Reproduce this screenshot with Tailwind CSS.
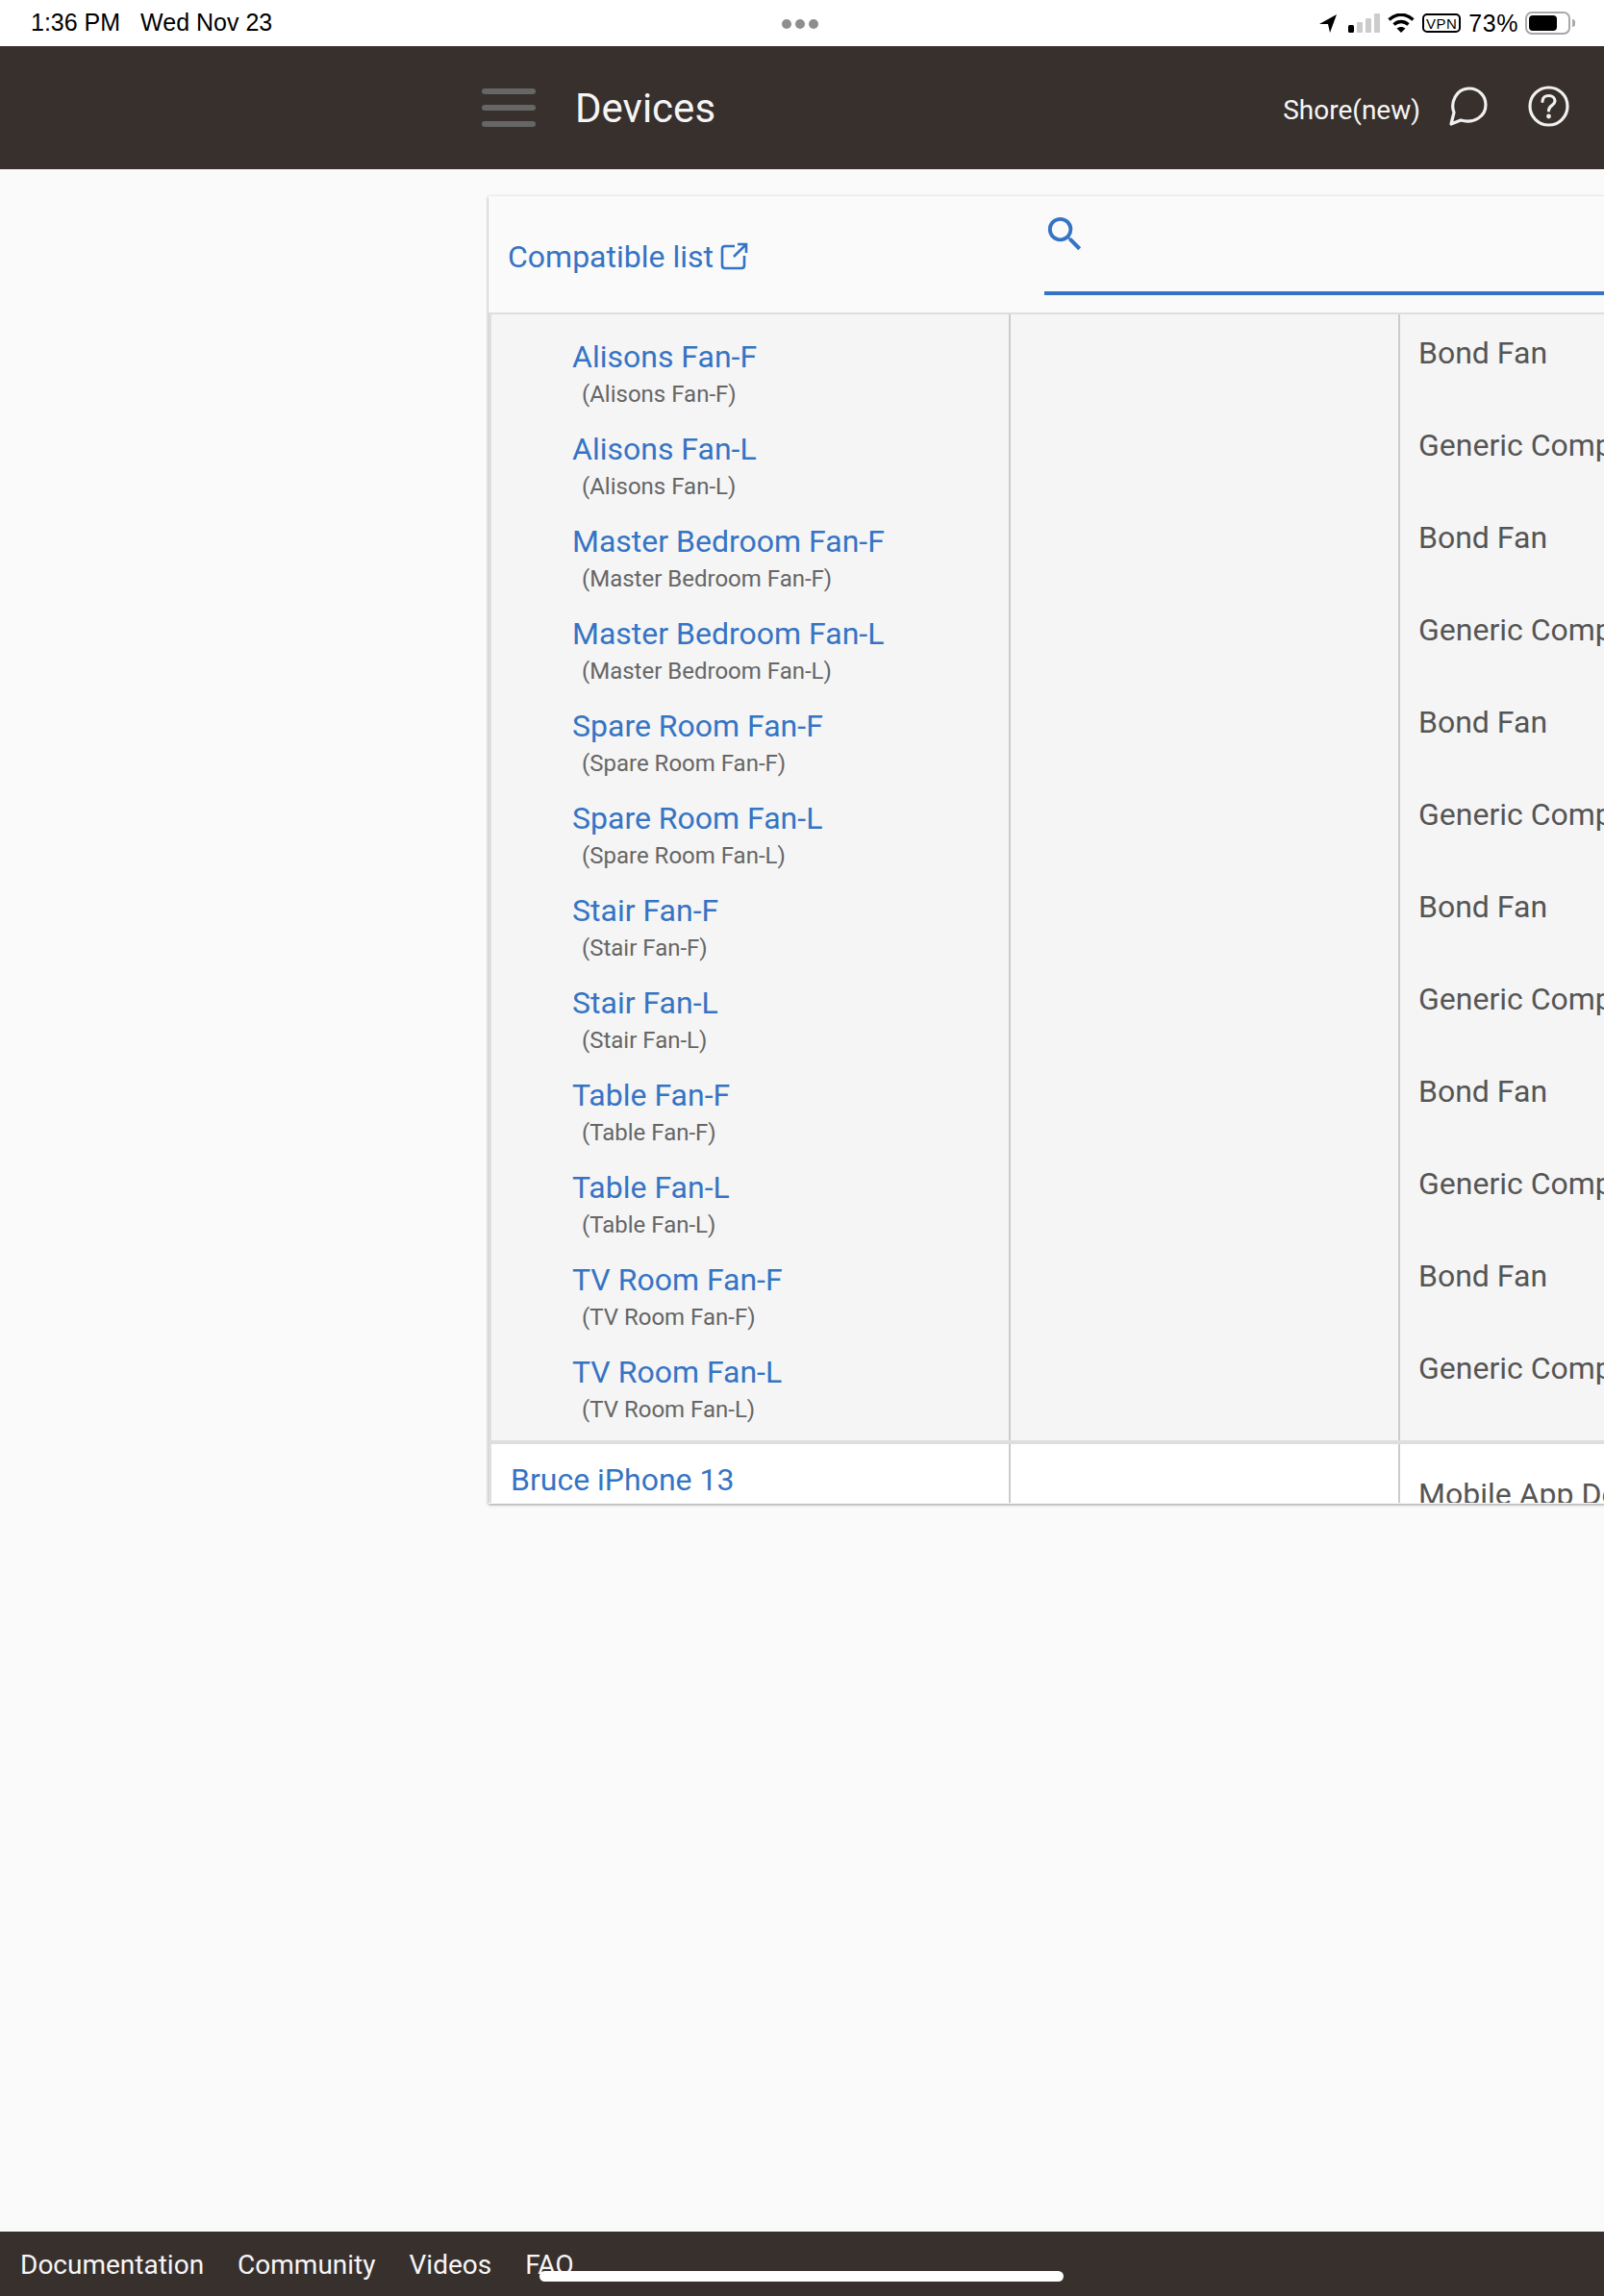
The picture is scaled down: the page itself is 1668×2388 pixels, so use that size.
<!doctype html>
<html lang="en">
<head>
<meta charset="utf-8">
<title>Devices</title>
<script src="https://cdn.jsdelivr.net/npm/@tailwindcss/browser@4"></script>
</head>
<body class="m-0">
<div class="relative flex flex-col w-[1668px] h-[2388px] overflow-hidden bg-[#fafafa] font-['Roboto',sans-serif]">

  <!-- iPad status bar -->
  <div class="relative flex items-center h-12 shrink-0 bg-white text-black font-['Liberation_Sans',sans-serif] text-[25px]">
    <span class="ml-8">1:36 PM</span>
    <span class="ml-[21px]">Wed Nov 23</span>
    <div class="absolute left-[813px] top-[20px] flex gap-[4px]">
      <span class="w-[10px] h-[10px] rounded-full bg-[#8e8e8e]"></span>
      <span class="w-[10px] h-[10px] rounded-full bg-[#8e8e8e]"></span>
      <span class="w-[10px] h-[10px] rounded-full bg-[#8e8e8e]"></span>
    </div>
    <div class="ml-auto mr-[30px] flex items-center">
      <svg class="w-[18px] h-[19px]" viewBox="0 0 18 19"><path d="M0 10 18 0 11 19 9 10Z" fill="#000"/></svg>
      <svg class="w-[34px] h-[20px] ml-[12px]" viewBox="0 0 34 20"><rect x="0" y="12" width="6" height="8" rx="1.5" fill="#000"/><rect x="9" y="9" width="6" height="11" rx="1" fill="#ccc"/><rect x="18" y="5" width="6" height="15" rx="1" fill="#ccc"/><rect x="27" y="0" width="6" height="20" rx="1" fill="#ccc"/></svg>
      <svg class="w-[28px] h-[20px] ml-[7px]" viewBox="0 0 28 20" fill="none" stroke="#000" stroke-width="3.4"><path d="M1.5 6.5C9 -0.5 19 -0.5 26.5 6.5"/><path d="M6.5 11.5C11 7.5 17 7.5 21.5 11.5"/><path d="M14 20 9.5 15.6C12 13.5 16 13.5 18.5 15.6Z" fill="#000" stroke="none"/></svg>
      <span class="ml-[8px] flex items-center justify-center w-[40px] h-[20px] rounded-[5px] border-2 border-black text-[15px] leading-none tracking-[0.5px]">VPN</span>
      <span class="ml-[8px] text-[25px] leading-none tracking-[0.6px]">73%</span>
      <div class="ml-[7px] flex items-center">
        <div class="w-[47px] h-[24px] rounded-[7px] border-2 border-[#a8a8a8] p-[2px]"><div class="w-[29px] h-full rounded-[4px] bg-black"></div></div>
        <span class="ml-[2px] w-[3px] h-[8px] rounded-r-full bg-[#a8a8a8]"></span>
      </div>
    </div>
  </div>

  <!-- App header -->
  <header class="flex items-center h-32 shrink-0 bg-[#38302d] text-[#f5f5f5]">
    <div class="ml-[501px] flex flex-col gap-[11px] w-[56px]">
      <span class="h-[6px] rounded-full bg-[#666]"></span>
      <span class="h-[6px] rounded-full bg-[#666]"></span>
      <span class="h-[6px] rounded-full bg-[#666]"></span>
    </div>
    <h1 class="ml-[41px] mt-[2px] text-[42px] leading-none font-normal">Devices</h1>
    <span class="ml-auto mt-[6px] text-[28px] leading-none">Shore(new)</span>
    <svg class="ml-[30px] -mt-[3px] w-[40px] h-[41px]" viewBox="0 0 40 41" fill="none" stroke="#f0f0f0" stroke-width="3.2" stroke-linejoin="round"><path d="M2 39 5 27C1 17 7 2 21 2 31 2 38 10 38 19 38 31 26 39 12 35Z"/></svg>
    <svg class="ml-[42px] mr-[36px] -mt-[4px] w-[43px] h-[43px]" viewBox="0 0 43 43" fill="none" stroke="#f0f0f0" stroke-width="3.2"><circle cx="21.5" cy="21.5" r="19.5"/><path d="M15 16.5C15 12.5 18 10.5 21.5 10.5 25.5 10.5 28 13 28 16 28 20.5 21.5 20.5 21.5 26" stroke-linecap="round"/><circle cx="21.5" cy="32" r="2.4" fill="#f0f0f0" stroke="none"/></svg>
  </header>

  <!-- Device table card -->
  <main class="flex-1 pt-7 pl-[508px] overflow-hidden">
    <div class="w-[1400px] h-[1360px] overflow-hidden bg-[#fafafa] shadow-[0_1px_3px_rgba(0,0,0,0.4)]">
      <div class="flex h-[121px]">
        <a class="flex items-center w-[578px] pl-[20px] pt-[5px] text-[32px] text-[#3574c4]">
          Compatible list
          <svg class="ml-[7px] -mt-[1px] w-[29px] h-[29px]" viewBox="0 0 29 29" fill="none" stroke="#3574c4" stroke-width="2.6"><path d="M15 4H5C3 4 2 5 2 7V24C2 26 3 27 5 27H22C24 27 25 26 25 24V14"/><path d="M14 15 27 2M18 2H27V11"/></svg>
        </a>
        <div class="flex-1 pt-[16px] h-[103px] border-b-[4px] border-[#3574c4]">
          <svg class="ml-[-2px] w-[47px] h-[47px]" viewBox="0 0 24 24" fill="#3574c4"><path d="M15.5 14h-.79l-.28-.27A6.47 6.47 0 0 0 16 9.5 6.5 6.5 0 1 0 9.5 16c1.61 0 3.09-.59 4.23-1.57l.27.28v.79l5 4.99L20.49 19l-4.99-5zm-6 0C7.01 14 5 11.99 5 9.5S7.01 5 9.5 5 14 7.01 14 9.5 11.99 14 9.5 14z"/></svg>
        </div>
      </div>

      <!-- Fan group -->
      <div class="grid grid-cols-[540px_405px_1fr] h-[1177px] border-t-2 border-b-4 border-l-[3px] border-[#dedede] bg-[#f5f5f5] box-border">
        <div class="pt-[15px] border-r-2 border-[#cccccc]">
          <div class="h-24 pl-[84px] pt-[10px]"><a class="block text-[32px] leading-[38px] text-[#3574c4]">Alisons Fan-F</a><p class="mt-[1px] pl-[10px] text-[24px] leading-[38px] text-[#666]">(Alisons Fan-F)</p></div>
          <div class="h-24 pl-[84px] pt-[10px]"><a class="block text-[32px] leading-[38px] text-[#3574c4]">Alisons Fan-L</a><p class="mt-[1px] pl-[10px] text-[24px] leading-[38px] text-[#666]">(Alisons Fan-L)</p></div>
          <div class="h-24 pl-[84px] pt-[10px]"><a class="block text-[32px] leading-[38px] text-[#3574c4]">Master Bedroom Fan-F</a><p class="mt-[1px] pl-[10px] text-[24px] leading-[38px] text-[#666]">(Master Bedroom Fan-F)</p></div>
          <div class="h-24 pl-[84px] pt-[10px]"><a class="block text-[32px] leading-[38px] text-[#3574c4]">Master Bedroom Fan-L</a><p class="mt-[1px] pl-[10px] text-[24px] leading-[38px] text-[#666]">(Master Bedroom Fan-L)</p></div>
          <div class="h-24 pl-[84px] pt-[10px]"><a class="block text-[32px] leading-[38px] text-[#3574c4]">Spare Room Fan-F</a><p class="mt-[1px] pl-[10px] text-[24px] leading-[38px] text-[#666]">(Spare Room Fan-F)</p></div>
          <div class="h-24 pl-[84px] pt-[10px]"><a class="block text-[32px] leading-[38px] text-[#3574c4]">Spare Room Fan-L</a><p class="mt-[1px] pl-[10px] text-[24px] leading-[38px] text-[#666]">(Spare Room Fan-L)</p></div>
          <div class="h-24 pl-[84px] pt-[10px]"><a class="block text-[32px] leading-[38px] text-[#3574c4]">Stair Fan-F</a><p class="mt-[1px] pl-[10px] text-[24px] leading-[38px] text-[#666]">(Stair Fan-F)</p></div>
          <div class="h-24 pl-[84px] pt-[10px]"><a class="block text-[32px] leading-[38px] text-[#3574c4]">Stair Fan-L</a><p class="mt-[1px] pl-[10px] text-[24px] leading-[38px] text-[#666]">(Stair Fan-L)</p></div>
          <div class="h-24 pl-[84px] pt-[10px]"><a class="block text-[32px] leading-[38px] text-[#3574c4]">Table Fan-F</a><p class="mt-[1px] pl-[10px] text-[24px] leading-[38px] text-[#666]">(Table Fan-F)</p></div>
          <div class="h-24 pl-[84px] pt-[10px]"><a class="block text-[32px] leading-[38px] text-[#3574c4]">Table Fan-L</a><p class="mt-[1px] pl-[10px] text-[24px] leading-[38px] text-[#666]">(Table Fan-L)</p></div>
          <div class="h-24 pl-[84px] pt-[10px]"><a class="block text-[32px] leading-[38px] text-[#3574c4]">TV Room Fan-F</a><p class="mt-[1px] pl-[10px] text-[24px] leading-[38px] text-[#666]">(TV Room Fan-F)</p></div>
          <div class="h-24 pl-[84px] pt-[10px]"><a class="block text-[32px] leading-[38px] text-[#3574c4]">TV Room Fan-L</a><p class="mt-[1px] pl-[10px] text-[24px] leading-[38px] text-[#666]">(TV Room Fan-L)</p></div>
        </div>
        <div class="border-r-2 border-[#cccccc]"></div>
        <div class="pt-[10px] pl-[19px] text-[32px] text-[#555]">
          <div class="h-24 leading-[60px]">Bond Fan</div>
          <div class="h-24 leading-[60px]">Generic Component Fan</div>
          <div class="h-24 leading-[60px]">Bond Fan</div>
          <div class="h-24 leading-[60px]">Generic Component Fan</div>
          <div class="h-24 leading-[60px]">Bond Fan</div>
          <div class="h-24 leading-[60px]">Generic Component Fan</div>
          <div class="h-24 leading-[60px]">Bond Fan</div>
          <div class="h-24 leading-[60px]">Generic Component Fan</div>
          <div class="h-24 leading-[60px]">Bond Fan</div>
          <div class="h-24 leading-[60px]">Generic Component Fan</div>
          <div class="h-24 leading-[60px]">Bond Fan</div>
          <div class="h-24 leading-[60px]">Generic Component Fan</div>
        </div>
      </div>

      <!-- Bruce row -->
      <div class="grid grid-cols-[540px_405px_1fr] h-[61px] border-l-[3px] border-[#dedede] bg-white overflow-hidden">
        <div class="pl-[20px] pt-[18px] border-r-2 border-[#cccccc] text-[32px] leading-[38px] text-[#3574c4]">Bruce iPhone 13</div>
        <div class="border-r-2 border-[#cccccc]"></div>
        <div class="pl-[19px] pt-[33px] text-[32px] leading-[38px] text-[#555] whitespace-nowrap">Mobile App Device</div>
      </div>
    </div>
  </main>

  <!-- Footer -->
  <footer class="flex items-center h-[67px] shrink-0 pl-[21px] pt-[2px] bg-[#38302d] text-[28px] text-[#f5f5f5]">
    <a>Documentation</a>
    <a class="ml-[35px]">Community</a>
    <a class="ml-[35px]">Videos</a>
    <a class="ml-[35px]">FAQ</a>
  </footer>
  <div class="absolute left-[561px] top-[2362px] w-[545px] h-[11px] rounded-full bg-white"></div>
</div>
</body>
</html>
